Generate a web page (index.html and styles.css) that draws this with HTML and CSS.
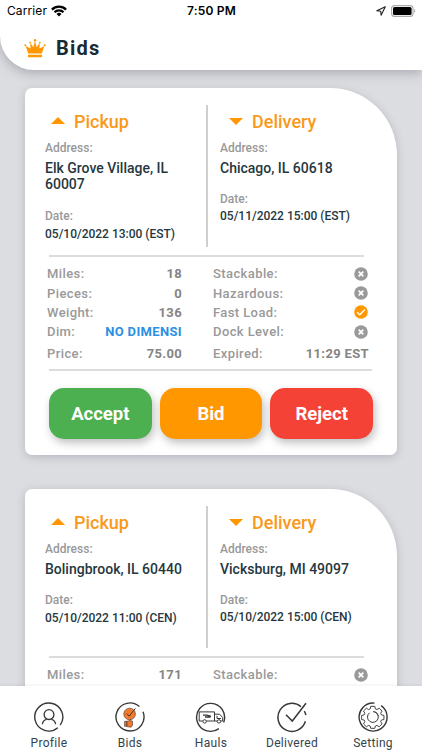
FILE: index.html
```html
<!DOCTYPE html>
<html lang="en">
<head>
<meta charset="utf-8">
<meta name="viewport" content="width=device-width, initial-scale=1">
<title>Bids</title>
<link rel="stylesheet" href="styles.css">
</head>
<body>
<svg class="defs" width="0" height="0" aria-hidden="true">
  <symbol id="no" viewBox="0 0 14 14"><circle cx="7" cy="7" r="6.8" fill="#9a9a9a"/><path d="M4.7 4.7l4.6 4.6M9.3 4.7L4.7 9.3" stroke="#fff" stroke-width="1.7" fill="none"/></symbol>
  <symbol id="yes" viewBox="0 0 14 14"><circle cx="7" cy="7" r="6.8" fill="#ff9800"/><path d="M3.1 7.2l2.7 2.6 5.1-5.3" stroke="#fff" stroke-width="1.4" fill="none"/></symbol>
</svg>
<div class="app">
  <header class="header">
    <div class="status">
      <div class="carrier"><span>Carrier</span>
        <svg width="16" height="12" viewBox="0 0 16 12"><g fill="none" stroke="#000" stroke-width="2.3"><path d="M.9 4.6a10 10 0 0 1 14.2 0"/><path d="M3.5 7.3a6.4 6.4 0 0 1 9 0"/></g><path d="M8 11.6L5.5 9a3.5 3.5 0 0 1 5 0z"/></svg>
      </div>
      <div class="clock">7:50 PM</div>
      <div class="power">
        <svg width="10" height="10" viewBox="0 0 10 10"><path d="M9.3.7L.8 4.8l3.9.4.4 4z" fill="none" stroke="#222" stroke-width="1.1" stroke-linejoin="round"/></svg>
        <svg width="25" height="12" viewBox="0 0 25 12"><rect x=".6" y=".6" width="21.4" height="10.8" rx="3" fill="none" stroke="#aaa" stroke-width="1.1"/><rect x="2" y="2" width="18.6" height="8" rx="1.6"/><path d="M23.3 4.1c1.3.6 1.3 3.2 0 3.8z" fill="#999"/></svg>
      </div>
    </div>
    <div class="title">
      <svg width="22" height="20" viewBox="0 0 22 20" fill="#ff9800"><path d="M4.2 15.4L1.6 8l4.9 2.4-.2-5.6 3.1 4.4L11 2.6l1.6 6.6 3.1-4.4-.2 5.6L20.400 8l-2.600 7.400z"/><rect x="4" y="16.700" width="14" height="2.500" rx=".4"/><circle cx="1.300" cy="7.300" r="1"/><circle cx="6.100" cy="4.600" r=".9"/><circle cx="11" cy="2.200" r="1.200"/><circle cx="15.900" cy="4.600" r=".9"/><circle cx="20.700" cy="7.300" r="1"/></svg>
      <h1>Bids</h1>
    </div>
  </header>

  <main class="list">
    <article class="card">
      <section class="route">
        <div class="stop pickup">
          <h2><i class="up"></i>Pickup</h2>
          <p class="label">Address:</p>
          <p class="place">Elk Grove Village, IL<br>60007</p>
          <p class="label date">Date:</p>
          <p class="when">05/10/2022 13:00 (EST)</p>
        </div>
        <div class="stop delivery">
          <h2><i class="down"></i>Delivery</h2>
          <p class="label">Address:</p>
          <p class="place">Chicago, IL 60618</p>
          <p class="label date">Date:</p>
          <p class="when">05/11/2022 15:00 (EST)</p>
        </div>
      </section>
      <section class="details">
        <dl>
          <div><dt>Miles:</dt><dd>18</dd></div>
          <div><dt>Pieces:</dt><dd>0</dd></div>
          <div><dt>Weight:</dt><dd>136</dd></div>
          <div><dt>Dim:</dt><dd class="dim">NO DIMENSI</dd></div>
          <div class="last"><dt>Price:</dt><dd>75.00</dd></div>
        </dl>
        <dl class="flags">
          <div><dt>Stackable:</dt><dd><svg><use href="#no"/></svg></dd></div>
          <div><dt>Hazardous:</dt><dd><svg><use href="#no"/></svg></dd></div>
          <div><dt>Fast Load:</dt><dd><svg><use href="#yes"/></svg></dd></div>
          <div><dt>Dock Level:</dt><dd><svg><use href="#no"/></svg></dd></div>
          <div class="last"><dt>Expired:</dt><dd>11:29 EST</dd></div>
        </dl>
      </section>
      <div class="actions">
        <button class="accept">Accept</button>
        <button class="bid">Bid</button>
        <button class="reject">Reject</button>
      </div>
    </article>

    <article class="card">
      <section class="route">
        <div class="stop pickup">
          <h2><i class="up"></i>Pickup</h2>
          <p class="label">Address:</p>
          <p class="place">Bolingbrook, IL 60440</p>
          <p class="label date">Date:</p>
          <p class="when">05/10/2022 11:00 (CEN)</p>
        </div>
        <div class="stop delivery">
          <h2><i class="down"></i>Delivery</h2>
          <p class="label">Address:</p>
          <p class="place">Vicksburg, MI 49097</p>
          <p class="label date">Date:</p>
          <p class="when">05/10/2022 15:00 (CEN)</p>
        </div>
      </section>
      <section class="details">
        <dl>
          <div><dt>Miles:</dt><dd>171</dd></div>
        </dl>
        <dl class="flags">
          <div><dt>Stackable:</dt><dd><svg><use href="#no"/></svg></dd></div>
        </dl>
      </section>
    </article>
  </main>

  <nav class="tabs">
    <a><svg viewBox="0 0 32 32"><path d="M27.2 24.2a14 14 0 1 0-2.4 2.6"/><g stroke-width="1.3"><circle cx="16" cy="13.6" r="4.9"/><path d="M9.4 23.2c.3-3 2-4.3 4.2-4.9M22.6 23.2c-.3-3-2-4.3-4.2-4.9"/></g></svg><span>Profile</span></a>
    <a><svg viewBox="0 0 32 32"><path d="M25.4 5.600a14 14 0 1 0 3.600 5.200"/><g stroke="#5b4334" stroke-width=".7" fill="#f37a2c"><circle cx="15.600" cy="13" r="5.800"/><path d="M10.600 20.300h2.200v5h-2.200zM12.800 20.300l2-.2 1.200-1.600 1 .3-.2 1.400h1.700v4.200l-1.400 1.800-4.300-.6z"/></g><path stroke-width="1" d="M12.800 12.700l2.400 2.500 6.200-7.800"/></svg><span>Bids</span></a>
    <a><svg viewBox="0 0 32 32"><path d="M28.600 21.500a14 14 0 1 0-4.700 6.100"/><g stroke-width="1"><path d="M7.800 20H4.200V10.900h15.300V20h-8.200"/><path d="M19.500 13.200h5l3.200 3.300V20h-1.800M22 20h-2.500M22 14.800v2.700h4"/><circle cx="9.600" cy="20.400" r="1.700"/><circle cx="24" cy="20.400" r="1.700"/><path stroke-width="1.300" d="M8 14.200h4l4 1.200M10 16h5.500"/></g></svg><span>Hauls</span></a>
    <a><svg viewBox="0 0 32 32"><path d="M25 5.700a14 14 0 1 0 4.400 14.600M28.300 10.200a14 14 0 0 1 1.600 3.800M10 13.700l6.300 6.300L30 2.200" stroke-width="1.500"/></svg><span>Delivered</span></a>
    <a><svg viewBox="0 0 32 32"><path d="M17.500 2.100a14 14 0 1 0 6.700 2.500"/><g stroke-width="1"><path d="M13.800 5.500h4.400l.6 2.800 1.700.7 2.400-1.500 3.100 3.100-1.500 2.400.7 1.700 2.800.6v4.400l-2.800.6-.7 1.700 1.500 2.400-3.100 3.100-2.400-1.500-1.700.7-.6 2.500h-4.400l-.6-2.500-1.700-.7-2.400 1.500L6 24.400 7.500 22l-.7-1.700-2.800-.6v-4.400l2.800-.6.7-1.700L6 10.600l3.100-3.100L11.500 9l1.700-.7z" transform="translate(.9 .2) scale(.93)"/><path d="M12.500 11.800a5.400 5.400 0 1 0 3.500-1.200M17.500 10.800a5.400 5.400 0 0 1 3.800 4"/></g></svg><span>Setting</span></a>
  </nav>
</div>
</body>
</html>
```
FILE: styles.css
```css
* { box-sizing: border-box; margin: 0; padding: 0; }
body { font-family: Roboto, "Liberation Sans", sans-serif; background: #dcdde0; }
.defs { display: none; }
.app { height: 750px; display: flex; flex-direction: column; overflow: hidden; }

.header { flex: none; height: 70px; background: #fff; border-radius: 0 0 0 34px; box-shadow: 0 3px 12px rgba(90, 95, 110, .4); }
.status { height: 22px; display: grid; grid-template-columns: 1fr auto 1fr; align-items: center; padding: 0 6px 0 7px; font: 12px/22px Inter, sans-serif; color: #000; }
.carrier { display: flex; align-items: center; gap: 4px; letter-spacing: .1px; }
.clock { font-weight: 600; letter-spacing: .2px; }
.power { display: flex; align-items: center; justify-content: flex-end; gap: 5px; }
.title { display: flex; align-items: center; height: 51px; padding-left: 24px; gap: 10px; }
.title h1 { font-size: 20px; line-height: 24px; font-weight: 700; letter-spacing: 1.2px; color: #192a32; }

.list { flex: 1; min-height: 0; overflow: hidden; padding: 18px 25px 0; display: flex; flex-direction: column; gap: 34px; }
.card { flex: none; height: 367px; padding: 17px 0 0; background: #fff; border-radius: 7px 67px 7px 7px; box-shadow: 0 2px 9px rgba(90, 95, 115, .3); }
.route { display: flex; height: 142px; }
.stop { padding: 4px 0 0 20px; }
.pickup { width: 183px; border-right: 2px solid #cfcfcf; }
.delivery { padding-left: 12px; }
.stop h2 { display: flex; align-items: center; gap: 9px; padding-left: 6px; height: 24px; font-size: 18px; font-weight: 500; color: #f9991c; }
.delivery h2 { padding-left: 9px; }
.up, .down { margin-bottom: 2px; border: 7px solid transparent; border-top: 0; border-bottom: 7px solid #ff9800; }
.down { margin-bottom: 0; border-bottom: 0; border-top: 7px solid #ff9800; }
.label { margin-top: 8px; font-size: 12px; line-height: 14px; color: #999; font-weight: 500; }
.place { margin-top: 5px; font-size: 14px; line-height: 16.4px; color: #263740; font-weight: 500; white-space: nowrap; }
.label.date { margin-top: 16px; }
.when { margin-top: 3px; font-size: 12px; line-height: 16px; color: #263740; font-weight: 500; white-space: nowrap; }
.delivery .when { margin-top: 2px; }

.details { display: flex; justify-content: space-between; margin: 8px 25px 0 24px; height: 116px; padding: 9px 3px 0 0; border-bottom: 2px solid #dcdcdc; position: relative; }
.details::before { content: ""; position: absolute; top: 0; left: 0; right: 8px; height: 2px; background: #dcdcdc; }
.details dl { width: 135px; margin-left: -2px; }
.details .flags { width: 156px; margin-left: 0; }
.details dl div { display: flex; justify-content: space-between; align-items: center; height: 19.4px; font-size: 13px; letter-spacing: .4px; color: #999; font-weight: 500; }
.details dl .last { margin-top: 2px; }
.details dd { color: #858585; font-weight: 700; white-space: nowrap; letter-spacing: .35px; }
.details .dim { color: #2b8fe4; }
.flags svg { display: block; width: 14px; height: 14px; margin-right: 1.5px; }

.actions { display: grid; grid-template-columns: repeat(3, 1fr); gap: 8px; margin: 17px 24px 0; }
.actions button { height: 51px; border: 0; border-radius: 15px; color: #fff; font: 700 18.5px/24px Roboto, sans-serif; box-shadow: 2px 4px 8px rgba(0, 0, 0, .25); }
.accept { background: #4caf50; }
.bid { background: #ff9800; }
.reject { background: #f44336; }

.tabs { flex: none; height: 64px; position: relative; background: #fff; display: grid; grid-template-columns: repeat(5, 81px); justify-content: center; box-shadow: 0 -1px 3px rgba(0, 0, 0, .06); }
.tabs a { display: flex; flex-direction: column; align-items: center; padding-top: 15px; color: #34434c; font-size: 12px; line-height: 16px; letter-spacing: .3px; }
.tabs svg { width: 32px; height: 32px; margin-bottom: 2px; fill: none; stroke: #383838; stroke-width: 1.4; }
```
